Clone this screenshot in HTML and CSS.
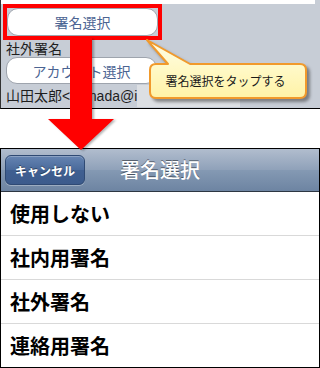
FILE: index.html
```html
<!DOCTYPE html>
<html lang="ja">
<head>
<meta charset="utf-8">
<link rel="stylesheet" href="styles.css">
</head>
<body>
<div class="page">
  <section class="editor">
    <div class="strip"></div>
    <div class="sig-row"><span class="sig-frame"><button class="pill pill-sig">署名選択</button></span></div>
    <div class="label">社外署名</div>
    <div class="acct-row"><button class="pill">アカウント選択</button></div>
    <div class="email-row"><span class="email">山田太郎&lt;yamada@i</span><span class="email-field"></span></div>
  </section>

  <section class="picker">
    <header class="nav">
      <button class="cancel">キャンセル</button>
      <h1 class="title">署名選択</h1>
      <span></span>
    </header>
    <ul class="list">
      <li>使用しない</li>
      <li>社内用署名</li>
      <li>社外署名</li>
      <li>連絡用署名</li>
    </ul>
  </section>

  <div class="callout">
    <svg class="callout-shape" width="172" height="70" viewBox="0 0 172 70">
      <defs>
        <linearGradient id="cg" x1="0" y1="0" x2="0" y2="1">
          <stop offset="0" stop-color="#fffee6"/>
          <stop offset="1" stop-color="#fff3a6"/>
        </linearGradient>
      </defs>
      <path d="M16 28 H28 L7 4 L50 28 H160 Q166 28 166 34 V56 Q166 62 160 62 H16 Q10 62 10 56 V34 Q10 28 16 28 Z" fill="url(#cg)" stroke="#f19a2c" stroke-width="2" stroke-linejoin="round"/>
    </svg>
    <div class="callout-text">署名選択をタップする</div>
  </div>

  <svg class="arrow" width="320" height="160" viewBox="0 0 320 160">
    <polygon points="70,38 92,38 92,119 114,119 81,150 48,119 70,119" fill="#ff0000"/>
  </svg>
</div>
</body>
</html>
```

FILE: styles.css
```css
* { box-sizing: border-box; }
html, body { margin: 0; padding: 0; background: #fff; }
body {
  font-family: "Liberation Sans", "Noto Sans CJK JP", sans-serif;
  width: 320px;
  height: 368px;
  overflow: hidden;
}
.page { position: relative; width: 320px; height: 368px; }

/* top editor panel */
.editor {
  height: 109px;
  background: #c7cdd6;
  border-left: 1px solid #333;
  border-bottom: 1px solid #000;
  display: flex;
  flex-direction: column;
}
.strip { height: 4px; background: #fff; margin-right: 5px; }
.sig-row { padding-left: 2px; display: flex; }
.sig-frame { display: flex; border: 4px solid #ff0000; }
.pill {
  width: 151px;
  height: 27px;
  padding: 0;
  border: 1px solid #9ea4ad;
  border-radius: 11px;
  background: #fff;
  color: #4b6493;
  font-family: "Noto Sans CJK JP", sans-serif;
  font-size: 14px;
  line-height: 1;
}
.pill-sig { height: 28px; }
.label {
  padding-left: 5px;
  height: 17px;
  font-size: 14px;
  line-height: 17px;
  color: #1e1e1e;
  font-family: "Noto Sans CJK JP", sans-serif;
}
.acct-row { padding-left: 5px; display: flex; }
.email-row { height: 24px; display: flex; align-items: center; }
.email {
  width: 136px;
  padding-left: 5px;
  overflow: hidden;
  white-space: nowrap;
  font-size: 14px;
  line-height: 24px;
  color: #1e1e1e;
}
.email-field { width: 103px; height: 22px; background: #dcdfe3; }

/* bottom picker */
.picker {
  margin-top: 39px;
  border: 1px solid #000;
  border-bottom: 0;
}
.nav {
  height: 43px;
  border-bottom: 1px solid #2d3642;
  background: linear-gradient(#b1bdce, #8fa1b9 50%, #8499b3 51%, #6d84a2);
  display: grid;
  grid-template-columns: 1fr auto 1fr;
  align-items: center;
  padding: 0 4px;
}
.cancel {
  width: 80px;
  height: 30px;
  padding: 0;
  border: 1px solid #2f4a74;
  border-radius: 6px;
  background: linear-gradient(#6584b2, #4a6a9b 50%, #3f5f91 51%, #3c5b8c);
  box-shadow: inset 0 1px 0 rgba(255,255,255,.25), 0 1px 0 rgba(255,255,255,.3);
  color: #fff;
  font-family: "Noto Sans CJK JP", sans-serif;
  font-weight: bold;
  font-size: 12px;
  text-shadow: 0 -1px 0 rgba(0,0,0,.45);
  justify-self: start;
}
.title {
  margin: 0;
  font-family: "Noto Sans CJK JP", sans-serif;
  font-size: 20px;
  font-weight: 500;
  color: #fff;
  text-shadow: 0 -1px 0 rgba(0,0,0,.45);
  line-height: 1;
}
.list { list-style: none; margin: 0; padding: 0; }
.list li {
  height: 44px;
  border-bottom: 1px solid #d9d9d9;
  padding-left: 9px;
  font-family: "Noto Sans CJK JP", sans-serif;
  font-weight: bold;
  font-size: 20px;
  line-height: 43px;
  color: #000;
}
.list li:last-child { border-bottom-color: #000; }

/* annotations */
.callout {
  position: absolute;
  left: 140px;
  top: 36px;
  width: 172px;
  height: 70px;
  padding: 28px 6px 8px 10px;
}
.callout-shape {
  position: absolute;
  left: 0;
  top: 0;
  filter: drop-shadow(3px 3px 1.5px rgba(60,60,60,.55));
}
.callout-text {
  position: relative;
  height: 34px;
  line-height: 34px;
  text-align: center;
  padding-right: 5px;
  font-family: "Noto Sans CJK JP", sans-serif;
  font-size: 12px;
  color: #1a1a1a;
}
.arrow {
  position: absolute;
  left: 0;
  top: 0;
  pointer-events: none;
  filter: drop-shadow(2px 1px 1px rgba(0,0,0,.3));
}
```
